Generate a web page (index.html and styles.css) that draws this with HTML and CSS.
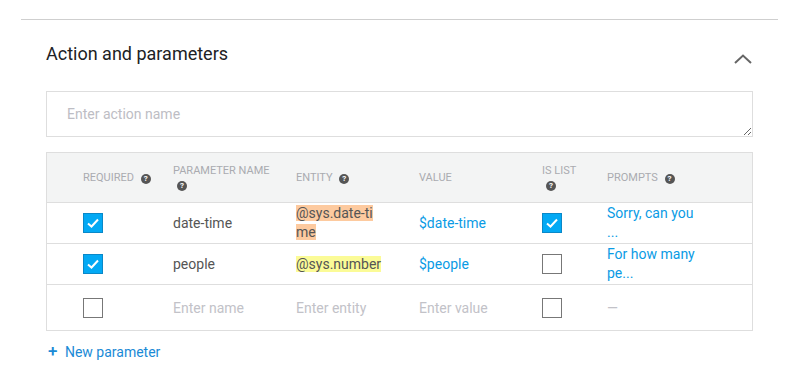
FILE: index.html
```html
<!DOCTYPE html>
<html lang="en">

<head>
    <meta charset="utf-8">
    <title>Action and parameters</title>
    <link rel="stylesheet" href="styles.css">
</head>

<body>
    <div class="page">
        <section class="panel">
            <!--overskrift med fold-ud pil-->
            <div class="panel-head">
                <h2>Action and parameters</h2>
                <svg class="chevron" width="18" height="10" viewBox="0 0 18 10">
                    <path d="M1 9 L9 1.5 L17 9" fill="none" stroke="#666" stroke-width="2"/>
                </svg>
            </div>

            <textarea class="action-name" placeholder="Enter action name"></textarea>

            <!--parameter tabel-->
            <div class="params">
                <div class="row head">
                    <div>Required <span class="help">?</span></div>
                    <div>Parameter name<br><span class="help">?</span></div>
                    <div>Entity <span class="help">?</span></div>
                    <div>Value</div>
                    <div>Is list<br><span class="help">?</span></div>
                    <div>Prompts <span class="help">?</span></div>
                </div>

                <div class="row">
                    <div><span class="box checked"></span></div>
                    <div>date-time</div>
                    <div class="entity"><span class="hl orange">@sys.date-time</span></div>
                    <div class="link">$date-time</div>
                    <div><span class="box checked"></span></div>
                    <div class="link prompt">Sorry, can you<br>...</div>
                </div>

                <div class="row">
                    <div><span class="box checked"></span></div>
                    <div>people</div>
                    <div class="entity"><span class="hl yellow">@sys.number</span></div>
                    <div class="link">$people</div>
                    <div><span class="box"></span></div>
                    <div class="link prompt">For how many<br>pe...</div>
                </div>

                <div class="row empty">
                    <div><span class="box"></span></div>
                    <div class="ph">Enter name</div>
                    <div class="ph">Enter entity</div>
                    <div class="ph">Enter value</div>
                    <div><span class="box"></span></div>
                    <div class="ph">&mdash;</div>
                </div>
            </div>

            <a href="#" class="new-param"><span class="plus">+</span> New parameter</a>
        </section>
    </div>
</body>

</html>
```

FILE: styles.css
```css
body,
html {
    margin: 0;
    font-family: Roboto, "Liberation Sans", sans-serif;
    background: #fff;
}

.page {
    padding: 0 20px 0 21px;
}

.panel {
    border-top: 1px solid #cfcfcf;
    margin-top: 19px;
    padding: 0 25px;
}

/* overskrift */

.panel-head {
    display: flex;
    justify-content: space-between;
    align-items: center;
    height: 70px;
}

.panel-head h2 {
    margin: 0;
    font-size: 18px;
    font-weight: 400;
    color: #202124;
    position: relative;
    top: -2px;
}

.chevron {
    margin-right: 1px;
    position: relative;
    top: 4px;
}

.action-name {
    display: block;
    box-sizing: border-box;
    width: 100%;
    height: 46px;
    margin: 1px 0 15px;
    padding: 14px 20px 12px;
    border: 1px solid #dedede;
    font-family: Roboto, "Liberation Sans", sans-serif;
    font-size: 14px;
    color: #333;
}

.action-name::placeholder {
    color: #bdbdc4;
}

/* tabel */

.params {
    border: 1px solid #dedede;
}

.row {
    display: grid;
    grid-template-columns: 90px 123px 123px 123px 65px 1fr;
    align-items: center;
    padding-left: 36px;
    min-height: 40px;
    border-top: 1px solid #dedede;
    font-size: 14px;
    color: #555;
}

.row.head {
    border-top: none;
    background: #f3f4f4;
    height: 49px;
    font-size: 11px;
    text-transform: uppercase;
    color: #aaabb0;
    line-height: 14px;
}

.row.empty {
    height: 45px;
}

.help {
    display: inline-block;
    width: 10px;
    height: 10px;
    border-radius: 50%;
    background: #555;
    color: #fff;
    font-size: 8px;
    font-weight: 700;
    line-height: 10px;
    text-align: center;
    margin-left: 4px;
    vertical-align: 0;
}

.box {
    display: block;
    box-sizing: border-box;
    width: 20px;
    height: 20px;
    border: 1.5px solid #777;
    background: #fff;
}

.box.checked {
    border: 1px solid #0a88c8;
    background: #03a9f4 url("data:image/svg+xml,%3Csvg xmlns='http://www.w3.org/2000/svg' width='18' height='18'%3E%3Cpath d='M4 9.5 L7.5 12.5 L14 5.5' fill='none' stroke='white' stroke-width='2'/%3E%3C/svg%3E") center no-repeat;
}

.entity {
    width: 86px;
    word-break: break-all;
    line-height: 19px;
}

.hl.orange {
    background: #fdca9f;
}

.hl.yellow {
    background: #fbfb97;
}

.link {
    color: #0a9be5;
}

.prompt {
    line-height: 19px;
    padding-bottom: 1px;
}

.ph {
    color: #c2c2c8;
}

/* ny parameter knap */

.new-param {
    display: inline-block;
    margin: 10px 0 0 2px;
    font-size: 14px;
    color: #1a8ad6;
    text-decoration: none;
}

.plus {
    font-size: 17px;
    font-weight: 500;
    margin-right: 4px;
}
```
